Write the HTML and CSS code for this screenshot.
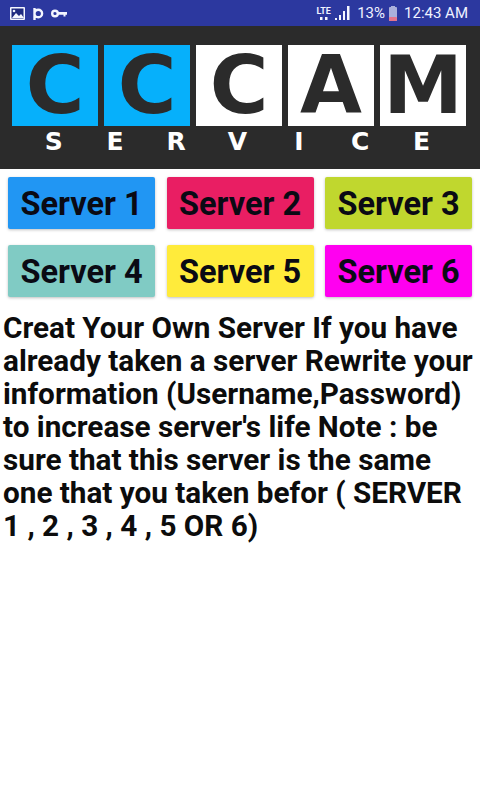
FILE: index.html
```html
<!DOCTYPE html>
<html lang="en">
<head>
<meta charset="utf-8">
<title>CCCAM Service</title>
<link rel="stylesheet" href="styles.css">
</head>
<body>
<div class="status">
  <div class="status-left">
    <svg class="i-pic" viewBox="0 0 15 13"><rect width="15" height="13" rx="1" fill="#f4f6ff"/><rect x="1.5" y="1.5" width="12" height="10" fill="#1f2a80"/><path d="M2 11l4-5 3 3 2-2 3 4z" fill="#f4f6ff"/><circle cx="4" cy="4" r="1.3" fill="#f4f6ff"/></svg>
    <svg class="i-p" viewBox="0 0 11 15"><path d="M1.5 14V2M1.5 7.500a3.800 3.800 0 1 0 7.600 0a3.800 3.800 0 1 0-7.600 0" fill="none" stroke="#f4f6ff" stroke-width="2.400"/></svg>
    <svg class="i-key" viewBox="0 0 16 9"><circle cx="4" cy="4.500" r="2.800" fill="none" stroke="#f4f6ff" stroke-width="2.400"/><path d="M6.500 3H16V5.800H14.500V7.500H12.500V5.800H6.500z" fill="#f4f6ff"/></svg>
  </div>
  <div class="status-right">
    <span class="lte">LTE<svg class="i-dots" viewBox="0 0 10 3"><rect x="1" width="2.500" height="3" fill="#f4f6ff"/><rect x="6" width="2.500" height="3" fill="#f4f6ff"/></svg></span>
    <svg class="i-sig" viewBox="0 0 15 14"><path d="M0 14h2v-2H0zM4 14h2V9H4zM8 14h2V5H8zM12 14h2.500V0H12z" fill="#f4f6ff"/></svg>
    <span class="pct">13%</span>
    <svg class="i-bat" viewBox="0 0 8 15"><rect x="2" width="4" height="1.500" fill="#aab0dc"/><rect y="1" width="8" height="14" rx="1" fill="#aab0dc"/><rect y="11" width="8" height="4" rx="1" fill="#e4748c"/></svg>
    <span class="clock">12:43 AM</span>
  </div>
</div>
<header class="logo">
  <div class="tiles">
    <div class="tile tile-blue">C</div>
    <div class="tile tile-blue">C</div>
    <div class="tile">C</div>
    <div class="tile">A</div>
    <div class="tile">M</div>
  </div>
  <div class="service"><span>S</span><span>E</span><span>R</span><span>V</span><span>I</span><span>C</span><span>E</span></div>
</header>
<main class="servers">
  <button class="srv s1">Server 1</button>
  <button class="srv s2">Server 2</button>
  <button class="srv s3">Server 3</button>
  <button class="srv s4">Server 4</button>
  <button class="srv s5">Server 5</button>
  <button class="srv s6">Server 6</button>
</main>
<p class="note">Creat Your Own Server If you have already taken a server Rewrite your information (Username,Password) to increase server's life Note : be sure that this server is the same one that you taken befor ( SERVER 1 , 2 , 3 , 4 , 5 OR 6)</p>
</body>
</html>
```
FILE: styles.css
```css
* { box-sizing: border-box; }
html, body { margin: 0; background: #fff; }
body { width: 480px; height: 800px; overflow: hidden; font-family: Roboto, "Liberation Sans", sans-serif; }

.status { height: 26px; background: #2c389f; display: flex; justify-content: space-between; align-items: center; color: #f0f2ff; padding: 0 12px 0 10px; }
.status-left, .status-right { display: flex; align-items: center; }
.i-pic { width: 15px; height: 13px; margin-right: 8px; }
.i-p { width: 11px; height: 15px; margin-right: 7px; }
.i-key { width: 16px; height: 9px; }
.lte { display: flex; flex-direction: column; align-items: center; font-size: 9px; font-weight: 700; line-height: 9px; width: 15px; margin-right: 4px; }
.i-dots { width: 10px; height: 3px; margin-top: 1px; display: block; }
.i-sig { width: 15px; height: 14px; margin-right: 7px; }
.pct { font-size: 15px; margin-right: 4px; }
.i-bat { width: 8px; height: 15px; margin-right: 7px; }
.clock { font-size: 15px; }

.logo { height: 143px; background: #2b2b2b; padding-top: 19px; }
.tiles { display: flex; gap: 6px; padding-left: 12px; }
.tile { width: 86px; height: 81px; background: #fff; color: #2b2b2b; font: 700 80px/81px "DejaVu Sans", sans-serif; display: flex; align-items: center; justify-content: center; }
.tile-blue { background: #06b0fb; }
.service { display: grid; grid-template-columns: repeat(7, 61.300px); margin: 2px 0 0 23px; color: #fff; font: 700 25px/28px "DejaVu Sans", sans-serif; text-align: center; }

.servers { display: grid; grid-template-columns: repeat(3, 147px); column-gap: 11.500px; row-gap: 16px; padding: 8px 0 0 8px; }
.srv { height: 52px; border: 0; padding: 2px 0 0; border-radius: 2px; color: #0a0a14; font: 700 32.500px/50px Roboto, "Liberation Sans", sans-serif; box-shadow: 0 1px 3px rgba(0, 0, 0, .25); }
.s1 { background: #2196f3; }
.s2 { background: #e91e63; }
.s3 { background: #c0d72e; }
.s4 { background: #80cbc4; }
.s5 { background: #ffeb3b; }
.s6 { background: #ff00f0; }

.note { margin: 14px 0 0; padding: 0 3px; font-size: 29.700px; font-weight: 700; line-height: 33px; color: #0c0c0c; }
```
